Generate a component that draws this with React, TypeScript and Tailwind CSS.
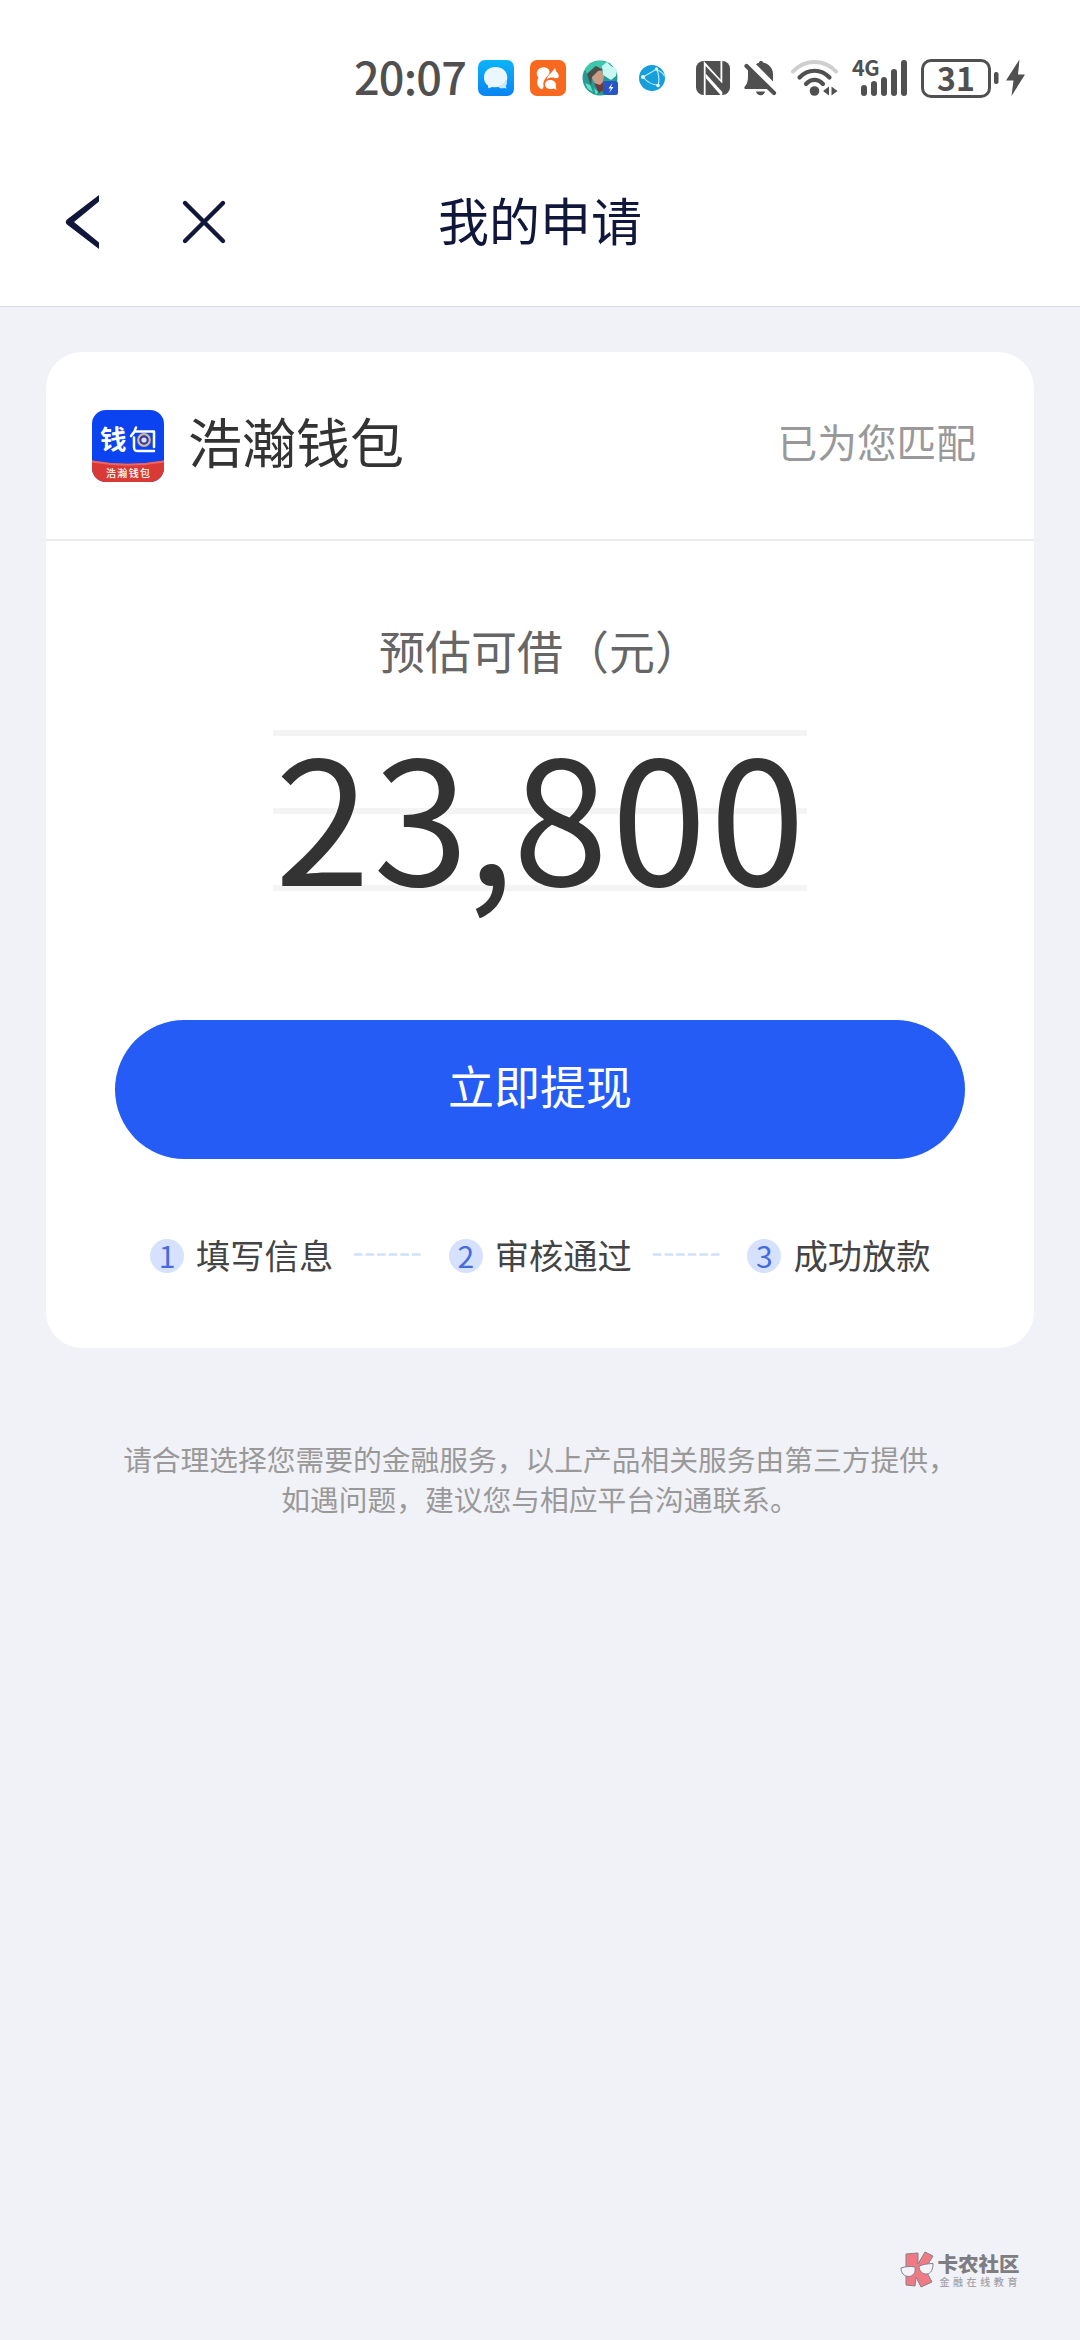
import React from 'react';

const STEPS = ['填写信息', '审核通过', '成功放款'];

const StatusBar: React.FC = () => (
  <div className="flex h-[156px] items-center pl-[354px]">
    <span className="w-[124px] whitespace-nowrap pb-1.5 text-[45px] font-medium leading-none tracking-[-0.8px] text-[#505050]">20:07</span>

    {/* message app */}
    <svg className="mr-4 h-9 w-9 shrink-0" viewBox="0 0 36 36">
      <defs>
        <linearGradient id="msg" x1="0" y1="0" x2="0" y2="1">
          <stop offset="0" stopColor="#0bb4f8" />
          <stop offset="1" stopColor="#0a84f2" />
        </linearGradient>
      </defs>
      <rect width="36" height="36" rx="7" fill="url(#msg)" />
      <path d="M17.500 7C10.500 7 6 11.500 6 17.500c0 3.500 1.300 6 4 8l.3 2.700 4-1.200c1 .2 2 .3 3 .3 7 0 12-3.800 12-9.800S24.500 7 17.500 7z" fill="#eaf7ff" />
      <path d="M19.500 26c1.500 2 4 2.800 6.500 2l2.500.5-.7-2.500c1.500-2 1.500-4.500 0-6.500-1.500 4-4.300 6-8.300 6.500z" fill="#c8e8fd" />
    </svg>

    {/* squirrel browser */}
    <svg className="mr-4 h-9 w-9 shrink-0" viewBox="0 0 36 36">
      <rect width="36" height="36" rx="7" fill="#f8691f" />
      <path d="M12 29.500C7 27 6 22 8.500 17.500 5 14 7 8.500 12 7.500c4-1 7.500 1.500 7.500 4.500 0 2.500-2 3.500-3.500 5.500-2 2.500-3 5-2.500 7.500.2 1.800-.3 3.200-1.500 4.500z" fill="#fff" />
      <path d="M16.500 19.500c1-4.500 6-7 8.500-11.500l1.200 3.500c2 1.500 3 4 2.300 6-.8 1-2.500.8-4 .5-2.500-.8-5.500-.5-8 1.500z" fill="#fff" />
      <path d="M20 20c4 0 6.500 2.500 5.800 6l.7 4-2.700-1.500c-4.800 1.500-8.800-.5-8.800-4 0-2.600 2.200-4.500 5-4.500z" fill="#fff" />
    </svg>

    {/* game avatar */}
    <svg className="mr-[21px] h-9 w-9 shrink-0" viewBox="0 0 36 36">
      <circle cx="18" cy="18" r="17.500" fill="#249b94" />
      <path d="M3 9C8 1 18-1 26 3l-5 6-8-3-8 8z" fill="#3fc7ac" />
      <path d="M20 6l5-4 4 4 6 3-1 7-5 4-8-5z" fill="#c9f7f1" />
      <path d="M8 14l10-6 4 8-2 11-7-3z" fill="#c99d88" />
      <path d="M5 14l9-8 7 4-5 1-6 6-1 9z" fill="#4c4f48" />
      <path d="M12 23l6 2 4-4v9l-5 3z" fill="#6b3d3a" />
      <path d="M3 23l5 2 3 7-5-3zM12 28l4 4-2 3z" fill="#62e3cb" />
      <rect x="21" y="21" width="15" height="14" rx="2.500" fill="#2855c5" />
      <path d="M30.500 23l-4 5.500h2.500l-2 4.500 4.500-6h-2.500z" fill="#fff" />
    </svg>

    {/* network globe */}
    <svg className="mr-[31px] h-[26px] w-[26px] shrink-0" viewBox="0 0 26 26">
      <circle cx="13" cy="13" r="13" fill="#179fdb" />
      <g fill="none" stroke="#bdeaff" strokeWidth="1.200">
        <path d="M4 12L18 4M4 12c4 5 9 8 15 8M17 3c3 5 3.500 12 2 18M18 5c3 1 6 3 7.500 6" />
      </g>
      <circle cx="4" cy="12" r="2" fill="#e6f8ff" />
      <circle cx="17.500" cy="4" r="1.700" fill="#e6f8ff" />
      <circle cx="19" cy="20.500" r="1.800" fill="#e6f8ff" />
    </svg>

    {/* nfc */}
    <svg className="mr-[14px] h-[34px] w-[34px] shrink-0" viewBox="0 0 34 34">
      <rect width="34" height="34" rx="7.500" fill="#505050" />
      <path d="M7.800 0L24.500 18.500V0h1.800v22.500L9.600 5v29H7.800z" fill="#fff" />
      <path d="M9.600 12.500L26.300 31v3h-1.800L9.600 17z" fill="#fff" />
    </svg>

    {/* muted bell */}
    <svg className="mr-3.5 h-9 w-[33px] shrink-0" viewBox="0 0 33 36">
      <path d="M4 8l21 21H1.500C0 29 0 27 1.200 26 3.500 23.500 4 20 4 16z" fill="#505050" />
      <path d="M12 4.200c1-.8 2-1.200 3-1.400C15 .5 19 .5 19.500 2.800 25.500 4 29 9 29 14v7.500z" fill="#505050" />
      <path d="M12 31.500h9c-1 5-8 5-9 0z" fill="#505050" />
      <path d="M2.500 6L30 33" stroke="#505050" strokeWidth="4.200" strokeLinecap="round" />
    </svg>

    {/* wifi */}
    <svg className="mr-3.5 h-9 w-[47px] shrink-0" viewBox="0 0 47 36">
      <g fill="none" strokeLinecap="round">
        <path d="M2 11.500C14-1.200 33-1.200 45 11.500" stroke="#cfcfcf" strokeWidth="4" />
        <path d="M8.500 17.500c8.500-9 21.500-9 30 0" stroke="#505050" strokeWidth="4.200" />
        <path d="M15 24c5-5.500 12-5.500 17 0" stroke="#505050" strokeWidth="4.200" />
      </g>
      <circle cx="23.500" cy="31" r="4.800" fill="#505050" />
      <path d="M38 26.500v9l-6-4.500zM40.500 26.500v9l6-4.500z" fill="#505050" />
    </svg>

    {/* cellular */}
    <div className="relative mr-[15px] h-9 w-[54px] shrink-0">
      <svg className="ml-[1.500px] h-9 w-[54px]" viewBox="0 0 54 36">
        <g fill="#505050">
          <rect x="7" y="25" width="6" height="11" rx="3" />
          <rect x="17" y="21" width="6" height="15" rx="3" />
          <rect x="27" y="17" width="6" height="19" rx="3" />
          <rect x="37" y="9" width="6" height="27" rx="3" />
          <rect x="47" y="0" width="6" height="36" rx="3" />
        </g>
      </svg>
      <span className="absolute left-0 -top-[7px] text-[21.500px] font-bold leading-[28px] tracking-[-0.5px] text-[#505050]">4G</span>
    </div>

    {/* battery */}
    <div className="flex h-[39px] w-[70px] shrink-0 items-center justify-center rounded-[10px] border-[3px] border-[#505050] pb-[3px] text-[32px] font-bold leading-[48px] text-[#505050]">
      31
    </div>
    <svg className="ml-[3px] h-10 w-8 shrink-0" viewBox="0 0 32 40">
      <rect x="0" y="14" width="4.500" height="12" rx="2" fill="#505050" />
      <path d="M25.500 1.500L12 22.500h7.500L17.500 38 31 16.500h-7z" fill="#505050" />
    </svg>
  </div>
);

const NavBar: React.FC = () => (
  <div className="grid h-[150px] grid-cols-3 items-start">
    <div className="flex items-center gap-[81px] pl-[64px] pt-[39px]">
      <svg className="h-[54px] w-9" viewBox="0 0 36 54" fill="#11173a">
        <path d="M35 0v6.500L10 27l25 20.500V54L3 29.500q-2.500-2.500 0-5z" />
      </svg>
      <svg className="h-[46px] w-[46px]" viewBox="0 0 46 46" fill="none" stroke="#11173a" strokeWidth="4.400" strokeLinecap="round">
        <path d="M4 4l38 38M42 4L4 42" />
      </svg>
    </div>
    <h1 className="pt-[38px] text-center text-[51px] leading-[50px] text-[#11173a]">我的申请</h1>
  </div>
);

const WalletLogo: React.FC = () => (
  <svg className="h-[72px] w-[72px]" viewBox="0 0 72 72" fontFamily="Noto Sans CJK SC, sans-serif">
    <defs>
      <clipPath id="logo">
        <rect width="72" height="72" rx="14" />
      </clipPath>
    </defs>
    <g clipPath="url(#logo)">
      <rect width="72" height="72" fill="#0c43f0" />
      <path d="M0 50.500Q36 57 72 50.500V72H0z" fill="#d93a35" />
      <path d="M0 51.500Q36 58 72 51.500" fill="none" stroke="#f0655f" strokeWidth="2" />
    </g>
    <text x="8" y="39" fontSize="26.500" fontWeight="700" fill="#fff">钱</text>
    <path d="M44 17.500c-1 4-2.500 6-5 8.500M43 21.500h19V37M42 27.500V37c0 3 1 4 4 4h16" fill="none" stroke="#fff" strokeWidth="2.500" strokeLinecap="round" strokeLinejoin="round" />
    <circle cx="52" cy="30" r="5.800" fill="#2b3aa8" stroke="#d5b795" strokeWidth="2.200" />
    <circle cx="52" cy="30" r="2.600" fill="#e8dcf0" />
    <text x="14" y="66.500" fontSize="10" fontWeight="500" fill="#fff" textLength="44">浩瀚钱包</text>
  </svg>
);

const Amount: React.FC = () => (
  <div className="relative mx-auto mt-[55px] h-[161px] w-[534px]">
    <div className="flex h-full flex-col justify-between">
      <div className="h-1.5 bg-[#f4f4f4]" />
      <div className="h-1.5 bg-[#f4f4f4]" />
      <div className="h-1.5 bg-[#f4f4f4]" />
    </div>
    <div className="absolute inset-x-0 -top-3 flex h-[186px] items-center justify-center text-[172px] leading-none text-[#333]">
      <span className="w-[98.500px] text-center">2</span>
      <span className="w-[98.500px] text-center">3</span>
      <span className="flex w-[41px] justify-center">,</span>
      <span className="w-[98.500px] text-center">8</span>
      <span className="w-[98.500px] text-center">0</span>
      <span className="w-[98.500px] text-center">0</span>
    </div>
  </div>
);

const Steps: React.FC = () => (
  <div className="mt-[74px] flex items-center pl-[104px]">
    {STEPS.map((step, i) => (
      <React.Fragment key={step}>
        <div className="flex h-[46px] items-center">
          <span className="flex h-[34px] w-[34px] items-center justify-center rounded-full bg-[#d6e2fd] pb-[2px] text-[30px] leading-none text-[#456be0]">{i + 1}</span>
          <span className="ml-3 whitespace-nowrap pb-[3px] text-[34.300px] leading-[43px] text-[#444]">{step}</span>
        </div>
        {i < STEPS.length - 1 && (
          <svg className="mb-[3px] ml-[21px] mr-[26.500px] h-[3px] w-[68px] shrink-0" viewBox="0 0 68 3">
            <path d="M0 1.500H68" stroke="#cfe0fa" strokeWidth="2.400" strokeDasharray="8.500 3.100" />
          </svg>
        )}
      </React.Fragment>
    ))}
  </div>
);

const Watermark: React.FC = () => (
  <div className="mb-[51px] mr-[59px] mt-auto flex items-center self-end">
    <svg className="mr-[3px] h-[38px] w-[34px]" viewBox="0 0 34 38" stroke="#858087" strokeWidth="1">
      <path d="M6 3l12-1v11l7-12 8 4-8 13 7 13-11 5-5-10-1 9-9-1z" fill="#ef7a86" />
      <path d="M1 17c4-1.500 10-2 14-1 1 6-2 9-6 9.500-5 0-8-3.500-8-8.500zM19 15c4-1.500 9-2.500 14-2.500 0 6-2 10-6 10.500-4.500.5-8-3-8-8z" fill="#f4f4f8" />
    </svg>
    <div className="flex flex-col">
      <span className="text-[20.500px] font-black leading-[22px] text-[#7d7d82]">卡农社区</span>
      <span className="mt-0.5 pl-0.5 text-[10px] font-medium leading-[12px] tracking-[3.600px] text-[#a2a2a8]">金融在线教育</span>
    </div>
  </div>
);

const App: React.FC = () => {
  return (
    <div lang="zh-CN" className="flex h-[2340px] w-[1080px] flex-col overflow-hidden bg-[#f1f2f7] font-['Noto_Sans_CJK_SC',sans-serif]">
      <header className="h-[307px] shrink-0 border-b border-[#d9dce5] bg-white">
        <StatusBar />
        <NavBar />
      </header>

      <main className="mx-[46px] mt-[45px] h-[996px] shrink-0 rounded-[36px] bg-white">
        <div className="flex h-[189px] items-center justify-between border-b-2 border-[#ebebeb] pl-[46px] pr-[58px]">
          <div className="flex items-center gap-6">
            <WalletLogo />
            <h2 className="pb-2.5 text-[54px] leading-[60px] text-[#333]">浩瀚钱包</h2>
          </div>
          <span className="pb-2.5 text-[39.700px] leading-[50px] text-[#999]">已为您匹配</span>
        </div>

        <p className="mt-[82px] text-center text-[46px] leading-[52px] text-[#666]">预估可借（元）</p>
        <Amount />

        <button className="mx-auto mt-[129px] flex h-[139px] w-[850px] items-center justify-center rounded-full bg-[#265cf6] pb-2.5 text-[46px] text-white">
          立即提现
        </button>
        <Steps />
      </main>

      <p className="mt-[91px] text-center text-[28.750px] leading-[40px] text-[#999]">
        请合理选择您需要的金融服务，以上产品相关服务由第三方提供，
        <br />
        如遇问题，建议您与相应平台沟通联系。
      </p>

      <Watermark />
    </div>
  );
};

export default App;
